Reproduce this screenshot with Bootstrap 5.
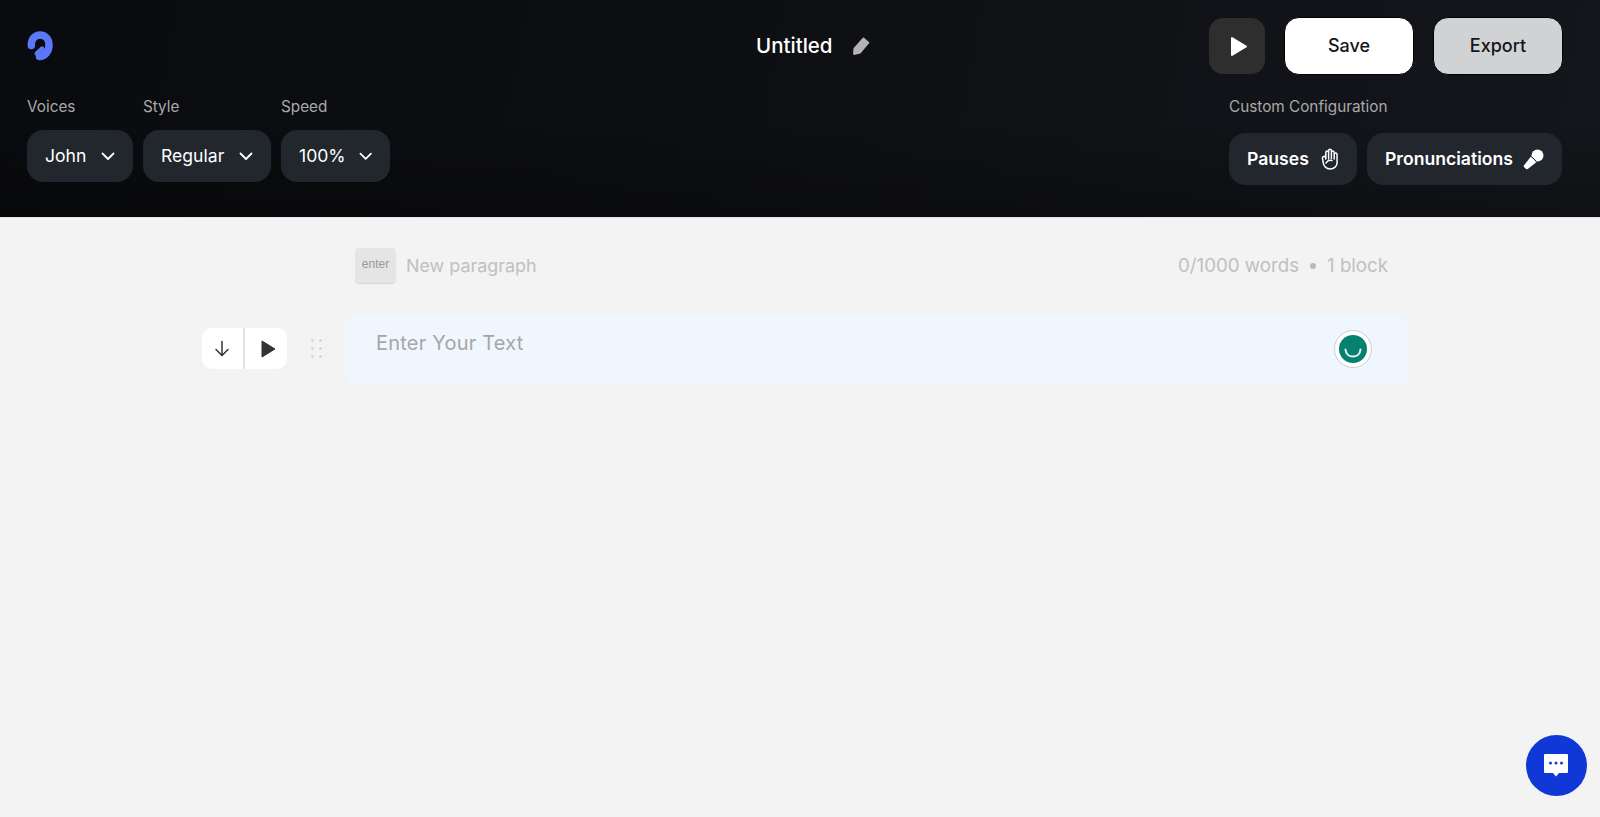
<!DOCTYPE html>
<html lang="en">
<head>
<meta charset="utf-8">
<title>Untitled</title>
<link href="https://cdn.jsdelivr.net/npm/bootstrap@5.3.0/dist/css/bootstrap.min.css" rel="stylesheet">
<style>
html,body{height:100%}
body{background:#f3f3f3;font-family:Inter,"Liberation Sans",sans-serif;overflow:hidden}
.top-bar{height:218px;background:linear-gradient(100deg,#0a0b0e 0%,#0d0e12 40%,#14161b 100%);padding:18px 37px 0 27px;border-bottom:1px solid #e4e4e4;position:relative}
.top-bar::after{content:"";position:absolute;inset:0;background:linear-gradient(180deg,transparent 55%,rgba(0,0,0,.25) 100%);pointer-events:none}
.top-bar>*{position:relative;z-index:1}
.row-one{height:56px}
.left-slot{flex:0 0 729px}
.logo-mark{width:28px;height:30px;display:block}
.title-wrap{color:#fff;font-size:20.5px;font-weight:500;gap:18px}
.sq-play{width:56px;height:56px;background:#2e2e2e;border:0;border-radius:14px;padding:0 0 0 3px}
.act-btn{width:130px;height:58px;border-radius:15px;font-size:18px;font-weight:500;border:1px solid #000;color:#14161b;padding-bottom:2px}
.act-save{background:#fff}
.act-export{background:#d1d2d4}
.row-two{margin-top:23px;padding-right:1px}
.lbl{font-size:15.3px;color:#a9a9a9;line-height:20px;height:20px;margin-bottom:13px}
.lbl-cfg{margin-bottom:16px}
.pick{height:52px;border-radius:16px;background:#22262d;color:#fff;font-size:17.6px;padding:0 18px;gap:13px;border:0}
.pick-voice{width:106px}.pick-style{width:128px}.pick-speed{width:109px}
.cfg-btn{height:52px;border-radius:16px;background:#22262d;color:#fff;font-size:17.6px;font-weight:600;padding:0 18px;gap:10px;border:0}
.cfg-pause{width:128px}.cfg-pron{width:195px}
.col-gap{gap:10px}
.main-area{width:1063px;margin-left:345px}
.hint-row{padding:30px 20px 0 10px;height:97px;color:#c1c0bf;font-size:17.9px}
.hint-stat{font-size:18.7px}
.key-cap{width:41px;height:36px;background:#e5e5e5;border-radius:4px;border-bottom:1px solid #d8d8d8;font-family:"Liberation Sans",Arial,sans-serif;font-size:12px;color:#999;margin-right:10px;padding-bottom:3px}
.sep-dot{width:6px;height:6px;border-radius:50%;background:#b9b9b9;margin:0 11px}
.block-row{position:relative}
.text-box{height:69px;background:#eff6fd;border-radius:10px;padding:13px 31px;font-size:20px;letter-spacing:.2px;line-height:30px;color:#a6a6a6;position:relative}
.side-tools{position:absolute;left:-143px;top:13px;gap:24px}
.mini-group{width:85px;height:41px;background:#fff;border-radius:10px;overflow:hidden}
.mini-cell{height:100%}
.mini-down{flex:0 0 41px;padding-right:1px}
.mini-run{flex:1 1 0;border-left:2px solid #e0e4ea;padding-left:5px}
.grip{width:11px;height:19px;display:block}
.gram-badge{position:absolute;right:36px;top:15px;width:38px;height:38px;border-radius:50%;background:#fff;border:1px solid #ccced3;padding:4px}
.gram-badge svg{display:block;width:28px;height:28px}
.chat-fab{position:absolute;left:1525.500px;top:734.500px;width:61px;height:61px;border-radius:50%;background:#1038d6;border:0;padding:0}
</style>
</head>
<body>
<header class="top-bar">
  <div class="row-one d-flex align-items-center">
    <div class="left-slot">
      <svg class="logo-mark" viewBox="0 0 28 30" aria-label="logo"><path d="M4.300 14.500C4.300 7.500 8.500 4 13 4c5.500 0 9 4.500 9 10 0 6.500-4 11.500-9.500 11.500" fill="none" stroke="#5a78f8" stroke-width="7.500" stroke-linecap="round"/><path d="M12.500 25.500L10 22.500l5-4.500" fill="none" stroke="#5a78f8" stroke-width="5" stroke-linecap="round" stroke-linejoin="round"/></svg>
    </div>
    <div class="title-wrap d-flex align-items-center">
      <span>Untitled</span>
      <svg width="20" height="20" viewBox="0 0 20 20"><path d="M13 1.800l5 4.100a1 1 0 0 1 .1 1.400L9.400 17.600 3 19l-1-1 .5-5.800L11.600 2a1 1 0 0 1 1.400-.2z" fill="#b4b4b4"/></svg>
    </div>
    <div class="d-flex align-items-center ms-auto" style="gap:19px">
      <button class="sq-play d-flex align-items-center justify-content-center" aria-label="Play"><svg width="18" height="21" viewBox="0 0 18 21"><path d="M2 2v17l14-8.500z" fill="#fff" stroke="#fff" stroke-width="2" stroke-linejoin="round"/></svg></button>
      <button class="act-btn act-save">Save</button>
      <button class="act-btn act-export">Export</button>
    </div>
  </div>
  <div class="row-two d-flex justify-content-between">
    <div class="d-flex col-gap">
      <div>
        <div class="lbl">Voices</div>
        <button class="pick pick-voice d-flex align-items-center justify-content-between">John <svg width="14" height="9" viewBox="0 0 14 9"><path d="M1.500 1.500L7 7l5.500-5.500" fill="none" stroke="#fff" stroke-width="1.800" stroke-linecap="round" stroke-linejoin="round"/></svg></button>
      </div>
      <div>
        <div class="lbl">Style</div>
        <button class="pick pick-style d-flex align-items-center justify-content-between">Regular <svg width="14" height="9" viewBox="0 0 14 9"><path d="M1.500 1.500L7 7l5.500-5.500" fill="none" stroke="#fff" stroke-width="1.800" stroke-linecap="round" stroke-linejoin="round"/></svg></button>
      </div>
      <div>
        <div class="lbl">Speed</div>
        <button class="pick pick-speed d-flex align-items-center justify-content-between">100% <svg width="14" height="9" viewBox="0 0 14 9"><path d="M1.500 1.500L7 7l5.500-5.500" fill="none" stroke="#fff" stroke-width="1.800" stroke-linecap="round" stroke-linejoin="round"/></svg></button>
      </div>
    </div>
    <div>
      <div class="lbl lbl-cfg">Custom Configuration</div>
      <div class="d-flex col-gap">
        <button class="cfg-btn cfg-pause d-flex align-items-center justify-content-between">Pauses
          <svg width="18" height="22" viewBox="0 0 18 22"><path d="M4.800 11V4.500a1.400 1.400 0 0 1 2.800 0V2.600a1.400 1.400 0 0 1 2.800 0v1.900a1.400 1.400 0 0 1 2.800 0v2a1.400 1.400 0 0 1 2.800 0l.1 8c0 3.800-3 6.400-7 6.400-3.500 0-6.700-2.500-6.900-6.400L1.400 9.800a1.600 1.600 0 0 1 3-.6l.4 1.800zM7.600 4.500V11M10.400 2.600V10.500M13.200 4.500V11M5 15c1.500-2.500 4-3 6-2.500" fill="none" stroke="#fff" stroke-width="1.500" stroke-linecap="round" stroke-linejoin="round"/></svg>
        </button>
        <button class="cfg-btn cfg-pron d-flex align-items-center justify-content-between">Pronunciations
          <svg width="21" height="21" viewBox="0 0 21 21"><circle cx="14.500" cy="6.500" r="6" fill="#fff"/><path d="M7.700 7.700l5.600 5.600-8.500 6.600a1.500 1.500 0 0 1-2-.1l-1.600-1.600a1.500 1.500 0 0 1-.1-2z" fill="#fff"/><path d="M9 8l4 4" stroke="#22262d" stroke-width="1"/></svg>
        </button>
      </div>
    </div>
  </div>
</header>
<main class="main-area">
  <div class="hint-row d-flex align-items-start justify-content-between">
    <div class="d-flex align-items-center">
      <span class="key-cap d-flex align-items-center justify-content-center">enter</span>
      <span>New paragraph</span>
    </div>
    <div class="hint-stat d-flex align-items-center" style="height:36px">
      <span>0/1000 words</span><span class="sep-dot"></span><span>1 block</span>
    </div>
  </div>
  <div class="block-row">
    <div class="side-tools d-flex align-items-center">
      <div class="mini-group d-flex">
        <div class="mini-cell mini-down d-flex align-items-center justify-content-center"><svg width="16" height="17" viewBox="0 0 16 17"><path d="M8 1.500v14M2 9.500l6 6 6-6" fill="none" stroke="#333" stroke-width="1.500" stroke-linecap="round" stroke-linejoin="round"/></svg></div>
        <div class="mini-cell mini-run d-flex align-items-center justify-content-center"><svg width="15" height="18" viewBox="0 0 15 18"><path d="M1 1v16l13-8z" fill="#333" stroke="#333" stroke-linejoin="round"/></svg></div>
      </div>
      <svg class="grip" viewBox="0 0 11 19"><g fill="#cfcfcf"><circle cx="1.500" cy="1.500" r="1.300"/><circle cx="9.500" cy="1.500" r="1.300"/><circle cx="1.500" cy="9.500" r="1.300"/><circle cx="9.500" cy="9.500" r="1.300"/><circle cx="1.500" cy="17.500" r="1.300"/><circle cx="9.500" cy="17.500" r="1.300"/></g></svg>
    </div>
    <div class="text-box">Enter Your Text
      <span class="gram-badge"><svg viewBox="0 0 28 28"><circle cx="14" cy="14" r="14" fill="#058170"/><path d="M6.500 14.500c.3 4.500 3.700 7 7.500 7s7.200-2.500 7.500-7" fill="none" stroke="#e6f2f0" stroke-width="2" stroke-linecap="round"/></svg></span>
    </div>
  </div>
</main>
<button class="chat-fab d-flex align-items-center justify-content-center" aria-label="Chat">
  <svg width="26" height="25" viewBox="0 0 26 25"><path d="M2 1h22a1 1 0 0 1 1 1v17a1 1 0 0 1-1 1h-8l-3 3.500L10 20H2a1 1 0 0 1-1-1V2a1 1 0 0 1 1-1z" fill="#fff"/><g fill="#1038d6"><circle cx="7.500" cy="10" r="1.500"/><circle cx="13" cy="10" r="1.500"/><circle cx="18.500" cy="10" r="1.500"/></g></svg>
</button>
<script src="https://cdn.jsdelivr.net/npm/bootstrap@5.3.0/dist/js/bootstrap.bundle.min.js"></script>
</body>
</html>
